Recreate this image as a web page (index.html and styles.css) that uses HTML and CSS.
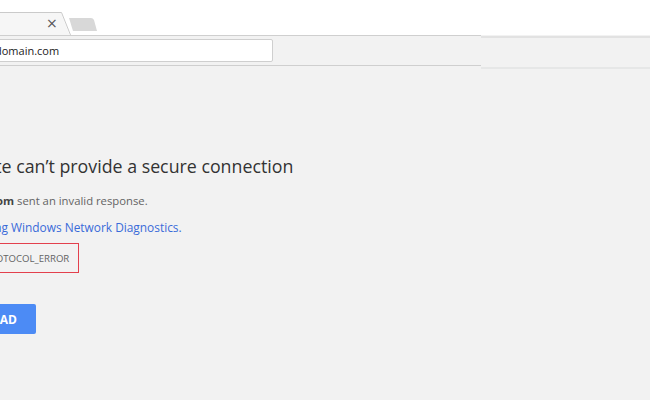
FILE: index.html
```html
<!DOCTYPE html>
<html>
<head>
<meta charset="utf-8">
<link rel="stylesheet" href="styles.css">
</head>
<body>
<div class="window">
  <div class="tabstrip">
    <div class="tab">
      <svg class="tab-shape" width="100" height="35" viewBox="0 0 100 35">
        <path d="M-2 13 H61 L69.5 35 H-2 Z" fill="#f6f6f6"/>
        <path d="M-2 12.5 H61.5 L70.5 35" fill="none" stroke="#cacaca" stroke-width="1"/>
        <path d="M69 18 H91 Q93 18 94 20 L97 31 H73 Z" fill="#d8d8d8"/>
      </svg>
      <span class="tab-close">×</span>
    </div>
  </div>
  <div class="toolbar">
    <div class="toolbar-main">
      <div class="omnibox"><span class="url">domain.com</span></div>
    </div>
    <div class="toolbar-side"></div>
  </div>
  <main class="content">
    <h1 class="title">This site can’t provide a secure connection</h1>
    <p class="summary"><strong>domain.com</strong> sent an invalid response.</p>
    <p class="suggest"><a href="#" class="link">Try running Windows Network Diagnostics.</a></p>
    <div class="code-box"><span class="code">ERR_SSL_PROTOCOL_ERROR</span></div>
    <button class="reload">RELOAD</button>
  </main>
</div>
</body>
</html>
```
FILE: styles.css
```css
html, body {
  margin: 0;
  padding: 0;
}
body {
  width: 650px;
  height: 400px;
  overflow: hidden;
  background: #f2f2f2;
  font-family: "Open Sans", "Noto Sans", sans-serif;
}
.window {
  display: flex;
  flex-direction: column;
}
.tabstrip {
  height: 35px;
  background: #ffffff;
  display: flex;
  align-items: flex-end;
}
.tab {
  position: relative;
  width: 100px;
  height: 35px;
}
.tab-shape {
  display: block;
}
.tab-close {
  position: absolute;
  left: 46px;
  top: 15px;
  font-size: 14px;
  line-height: 16px;
  color: #555;
  font-family: "DejaVu Sans", sans-serif;
}
.toolbar {
  display: flex;
  height: 31px;
}
.toolbar-main {
  width: 481px;
  border-top: 1px solid #cfcfcf;
  border-bottom: 1px solid #cfcfcf;
  background: #f2f2f2;
  display: flex;
  align-items: center;
}
.toolbar-side {
  flex: 1;
  margin-top: 1px;
  height: 29px;
  border-top: 2px solid #e2e2e2;
  border-bottom: 2px solid #e6e7e7;
  background: #f2f2f2;
}
.omnibox {
  margin-left: -10px;
  width: 281px;
  height: 21px;
  background: #ffffff;
  border: 1px solid #cfcfcf;
  border-radius: 2px;
  display: flex;
  align-items: center;
}
.url {
  margin-left: 4px;
  font-size: 11px;
  color: #222;
}
.content {
  margin-left: -56px;
  padding-top: 86px;
  color: #646464;
}
.title {
  margin: 0;
  font-size: 17.8px;
  font-weight: 400;
  color: #333333;
  line-height: 28px;
}
.summary {
  margin: 11px 0 0;
  font-size: 11.3px;
  line-height: 20px;
}
.summary strong {
  color: #444;
}
.suggest {
  margin: 6px 0 0;
  font-size: 11.9px;
  line-height: 20px;
}
.link {
  color: #3a6bd9;
  text-decoration: none;
}
.code-box {
  margin-top: 6px;
  width: 131px;
  height: 28px;
  border: 1px solid #e3404d;
  display: flex;
  align-items: center;
  padding-left: 2px;
}
.code {
  margin-left: -4px;
  font-size: 9.6px;
  color: #646464;
}
.reload {
  margin-top: 31px;
  display: block;
  height: 30px;
  width: 92px;
  border: 0;
  border-radius: 2px;
  background: #4c8bf5;
  color: #ffffff;
  font-family: "Open Sans", sans-serif;
  font-weight: 700;
  font-size: 12px;
  text-align: right;
  padding-right: 19px;
}
```
